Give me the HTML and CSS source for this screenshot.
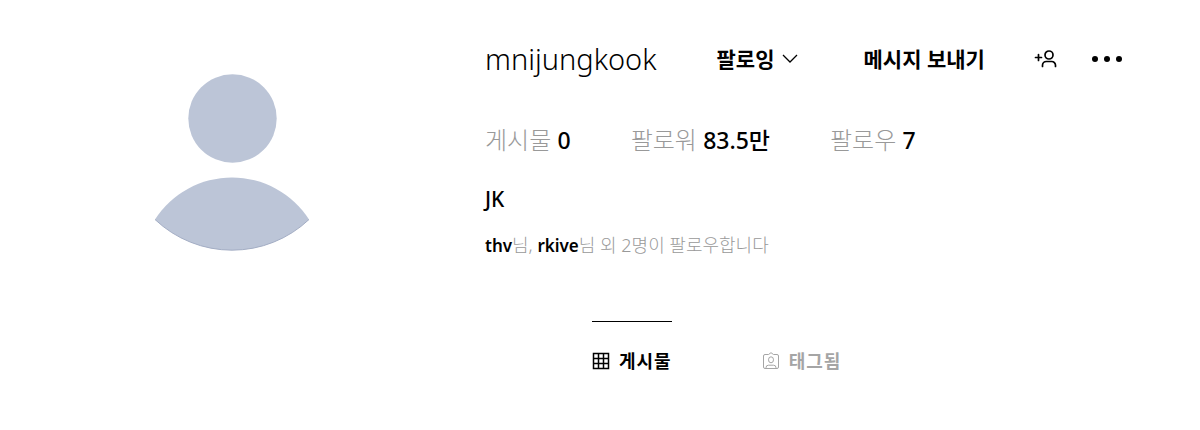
FILE: index.html
```html
<!DOCTYPE html>
<html lang="ko">
<head>
  <meta charset="UTF-8">
  <meta name="viewport" content="width=device-width, initial-scale=1.0">
  <title>mnijungkook</title>
  <link rel="stylesheet" href="styles.css">
</head>
<body>
  <main class="profile">
    <div class="avatar">
      <svg width="156" height="178" viewBox="0 0 156 178" role="img" aria-label="프로필 사진">
        <circle cx="77.500" cy="44.500" r="44.200"/>
        <path d="M0 145.500A91.500 91.500 0 0 1 154 145.500A112 112 0 0 1 0 145.500Z"/>
        <path class="edge" d="M0 145.500A112 112 0 0 0 154 145.500"/>
      </svg>
    </div>

    <section class="info">
      <header class="top">
        <h1 class="username">mnijungkook</h1>
        <button class="btn following">팔로잉
          <svg width="16" height="10" viewBox="0 0 16 10"><path d="M1 1l7 7 7-7"/></svg>
        </button>
        <button class="btn message">메시지 보내기</button>
        <button class="btn suggest" aria-label="비슷한 계정">
          <svg width="24" height="20" viewBox="0 0 24 20">
            <circle cx="15" cy="6" r="4"/>
            <path d="M8.500 17.500v-1.200a3.800 3.800 0 0 1 3.800-3.800h5.400a3.800 3.800 0 0 1 3.800 3.800v1.200M1.500 8.500h6M4.500 5.500v6"/>
          </svg>
        </button>
        <button class="btn more" aria-label="옵션">
          <svg width="32" height="8" viewBox="0 0 32 8">
            <circle cx="4" cy="4" r="3"/>
            <circle cx="16" cy="4" r="3"/>
            <circle cx="28" cy="4" r="3"/>
          </svg>
        </button>
      </header>

      <ul class="stats">
        <li>게시물 <b>0</b></li>
        <li><a href="#followers">팔로워 <b>83.5만</b></a></li>
        <li><a href="#following">팔로우 <b>7</b></a></li>
      </ul>

      <div class="name">JK</div>
      <p class="mutual"><a href="#thv">thv</a>님, <a href="#rkive">rkive</a>님 외 2명이 팔로우합니다</p>

      <nav class="tabs">
        <a class="tab active" href="#posts">
          <svg width="18" height="18" viewBox="0 0 18 18"><path d="M1.500 1.500h15v15h-15zM6.500 1.500v15M11.500 1.500v15M1.500 6.500h15M1.500 11.500h15"/></svg>
          게시물
        </a>
        <a class="tab" href="#tagged">
          <svg width="18" height="18" viewBox="0 0 18 18">
            <path d="M3 2.500h3.500L9 .700l2.500 1.800H15a1.500 1.500 0 0 1 1.500 1.500v11a1.500 1.500 0 0 1-1.500 1.500H3A1.500 1.500 0 0 1 1.500 15V4A1.500 1.500 0 0 1 3 2.500z"/>
            <ellipse cx="9" cy="7.800" rx="2.500" ry="3"/>
            <path d="M4 16.500v-.800a2.500 2.500 0 0 1 2.500-2.500h5a2.500 2.500 0 0 1 2.500 2.500v.800"/>
          </svg>
          태그됨
        </a>
      </nav>
    </section>
  </main>
</body>
</html>
```
FILE: styles.css
```css
* {
  box-sizing: border-box;
}
body {
  margin: 0;
  background: #fff;
  color: #000;
  font-family: "Noto Sans", "Noto Sans CJK KR", sans-serif;
}
a {
  color: inherit;
  text-decoration: none;
}
svg {
  display: block;
  fill: none;
  stroke: currentColor;
}
.profile {
  display: grid;
  grid-template-columns: 31fr 49fr;
}
.avatar {
  display: flex;
  justify-content: center;
  align-items: flex-start;
  padding-top: 74px;
}
.avatar svg {
  fill: #bcc5d7;
  stroke: none;
}
.avatar .edge {
  fill: none;
  stroke: #a3adc4;
}
.info {
  padding: 39px 20px 40px;
}
.top {
  display: flex;
  align-items: center;
  height: 40px;
}
.username {
  margin: 0;
  font-size: 29px;
  font-weight: 350;
  line-height: 40px;
}
.btn {
  display: flex;
  align-items: center;
  padding: 0;
  border: 0;
  background: none;
  color: #000;
  font: 700 21px/40px "Noto Sans", "Noto Sans CJK KR", sans-serif;
  white-space: nowrap;
  cursor: pointer;
}
.following {
  gap: 7px;
  margin-left: 60px;
}
.following svg {
  stroke-width: 1.3;
}
.message {
  margin-left: 66px;
}
.suggest {
  margin-left: 49px;
}
.suggest svg {
  stroke-width: 1.7;
  stroke-linecap: round;
}
.more {
  margin-left: 33px;
}
.more svg {
  fill: currentColor;
  stroke: none;
}
.stats {
  display: flex;
  gap: 60px;
  margin: 41px 0 0;
  padding: 0;
  list-style: none;
  color: #999;
  font-size: 24px;
  font-weight: 300;
  line-height: 40px;
}
.stats b {
  color: #000;
  font-size: 23px;
  font-weight: 500;
}
.name {
  margin-top: 24px;
  font-size: 21px;
  font-weight: 500;
  line-height: 30px;
}
.mutual {
  margin: 16px 0 0;
  color: #999;
  font-size: 18px;
  font-weight: 300;
  line-height: 30px;
}
.mutual a {
  color: #000;
  font-size: 17px;
  font-weight: 600;
}
.tabs {
  display: flex;
  gap: 90px;
  margin-top: 60px;
  padding-left: 107px;
}
.tab {
  display: flex;
  align-items: center;
  gap: 9px;
  padding-top: 24px;
  border-top: 1px solid transparent;
  color: #a5a5a5;
  font-size: 18px;
  font-weight: 700;
  line-height: 30px;
  letter-spacing: 1px;
}
.tab.active {
  border-color: #000;
  color: #000;
}
.tab.active svg {
  stroke-width: 1.5;
}
```
